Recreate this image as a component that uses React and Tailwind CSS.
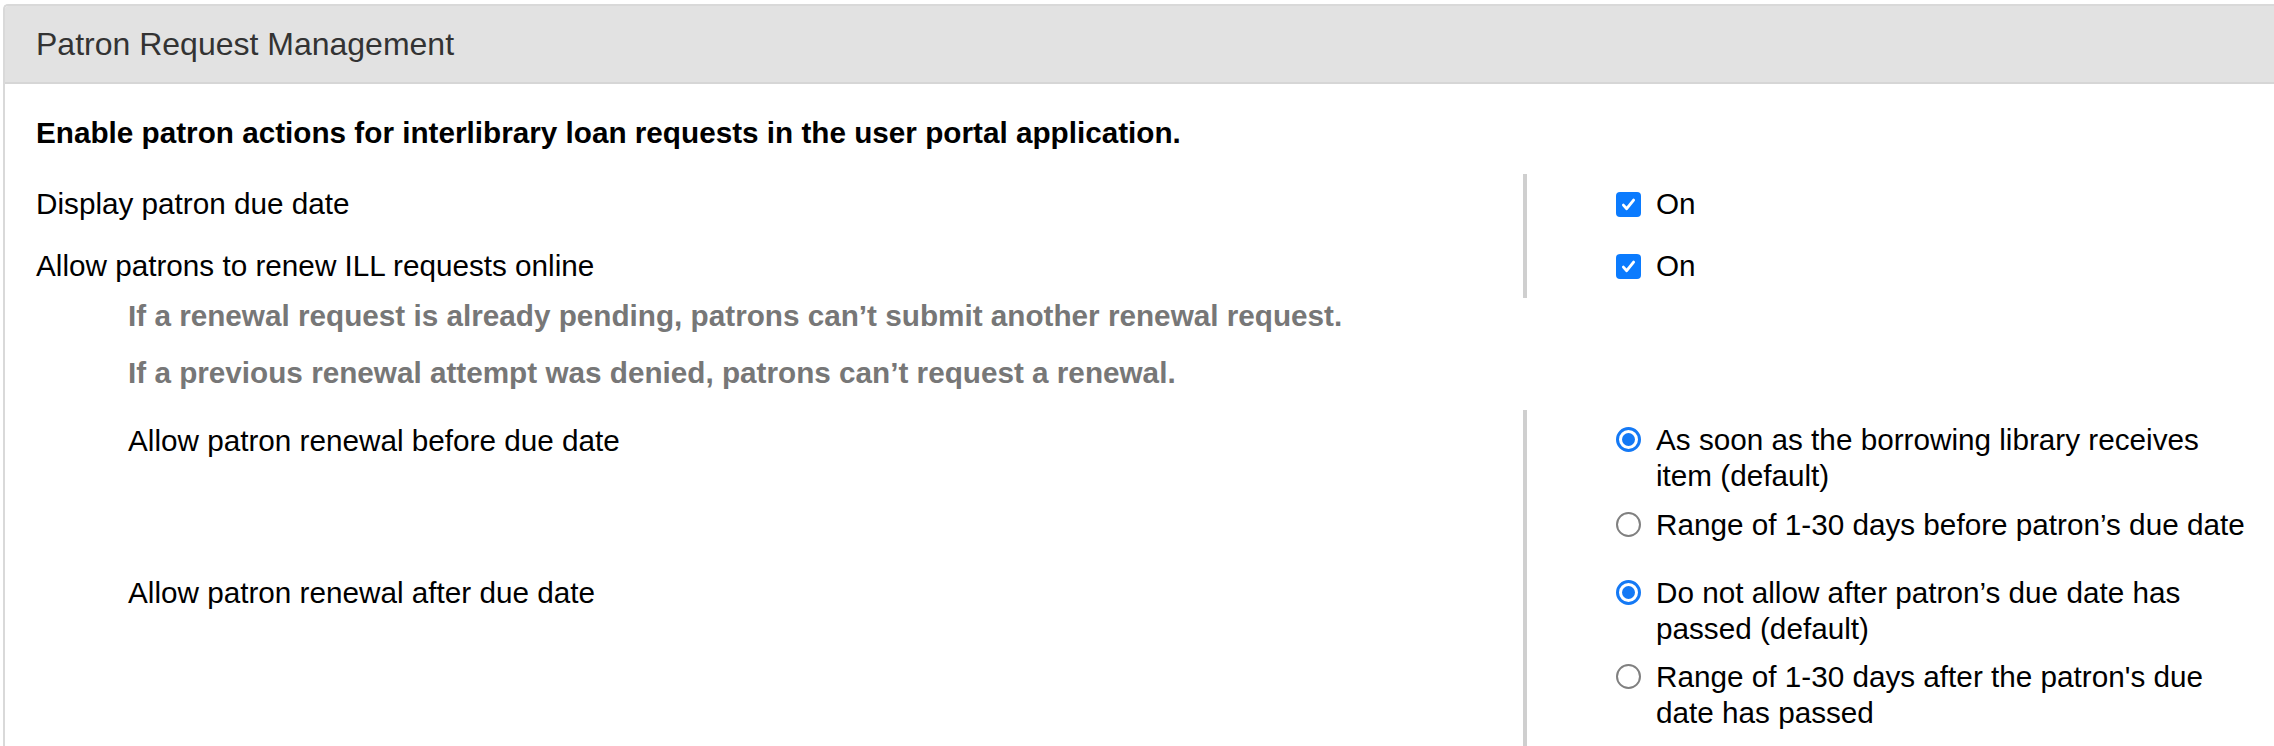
import React from 'react'

const font = { fontFamily: '"Liberation Sans", Arial, Helvetica, sans-serif' }

function CheckBox() {
  return (
    <span className="flex h-[25px] w-[25px] shrink-0 items-center justify-center rounded-[4px] bg-[#0b7bfe]">
      <svg width="17" height="17" viewBox="0 0 16 16" fill="none">
        <path d="M3.2 8.6l3.1 3.3L12.8 3.8" stroke="#fff" strokeWidth="2.7" strokeLinecap="round" strokeLinejoin="round" />
      </svg>
    </span>
  )
}

function Radio({ on }) {
  if (on) {
    return (
      <span className="mt-[5px] flex h-[25px] w-[25px] shrink-0 items-center justify-center rounded-full border-[3px] border-[#1479f5] bg-white">
        <span className="h-[13px] w-[13px] rounded-full bg-[#1479f5]" />
      </span>
    )
  }
  return <span className="mt-[5px] h-[25px] w-[25px] shrink-0 rounded-full border-2 border-[#808080] bg-white" />
}

function Option({ on, children, className = '' }) {
  return (
    <div className={`flex items-start gap-[15px] ${className}`}>
      <Radio on={on} />
      <span className="w-[598px] leading-[36px]">{children}</span>
    </div>
  )
}

function ToggleRow({ label, className }) {
  return (
    <div className={`flex ${className}`}>
      <div className="flex w-[1518px] items-center pl-[31px]">{label}</div>
      <div className="flex flex-1 items-center gap-[15px] border-l-4 border-[#cfcfcf] pl-[89px]">
        <CheckBox />
        <span>On</span>
      </div>
    </div>
  )
}

export default function App() {
  return (
    <div className="min-h-[746px] bg-white pl-[3px] pt-[4px] text-[29.7px] text-black" style={font}>
      <div className="w-[2290px] overflow-hidden rounded-tl-[5px] border-l-2 border-t-2 border-[#d9d9d9]">
        {/* Header */}
        <div className="flex h-[78px] items-center border-b-2 border-[#d6d6d6] bg-[#e2e2e2] pl-[31px] text-[32px] text-[#333]">
          Patron Request Management
        </div>

        <div className="pt-[31px] pl-[31px] font-bold leading-[36px]">
          Enable patron actions for interlibrary loan requests in the user portal application.
        </div>

        <div className="mt-[23px]">
          <ToggleRow label="Display patron due date" className="h-[60px]" />
          <ToggleRow label="Allow patrons to renew ILL requests online" className="h-[64px]" />
        </div>

        <div className="pl-[123px] font-bold leading-[36px] text-[#777]">
          <p>If a renewal request is already pending, patrons can’t submit another renewal request.</p>
          <p className="mt-[21px]">If a previous renewal attempt was denied, patrons can’t request a renewal.</p>
        </div>

        <div className="mt-[19px] flex">
          <div className="w-[1518px] pl-[123px] leading-[36px]">
            <div className="pt-[13px]">Allow patron renewal before due date</div>
            <div className="pt-[116px]">Allow patron renewal after due date</div>
          </div>
          <div className="flex-1 border-l-4 border-[#cfcfcf] pb-[40px] pl-[89px] pt-[12px]">
            <Option on>As soon as the borrowing library receives item (default)</Option>
            <Option className="mt-[13px]">Range of 1-30 days before patron’s due date</Option>
            <Option on className="mt-[32px]">Do not allow after patron’s due date has passed (default)</Option>
            <Option className="mt-[12px]">Range of 1-30 days after the patron's due date has passed</Option>
          </div>
        </div>
      </div>
    </div>
  )
}
